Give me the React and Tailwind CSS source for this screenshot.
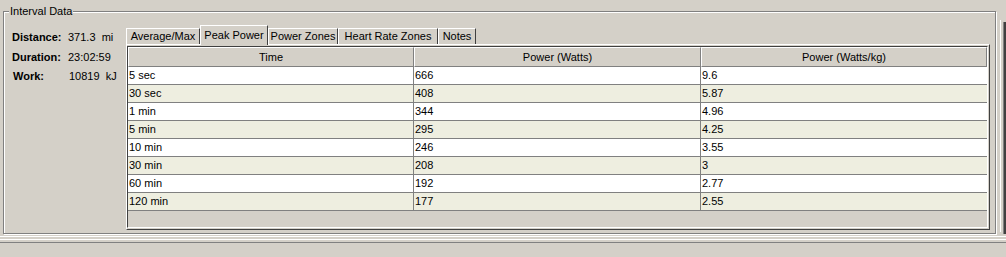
const rows = [
  ['5 sec', '666', '9.6'],
  ['30 sec', '408', '5.87'],
  ['1 min', '344', '4.96'],
  ['5 min', '295', '4.25'],
  ['10 min', '246', '3.55'],
  ['30 min', '208', '3'],
  ['60 min', '192', '2.77'],
  ['120 min', '177', '2.55'],
];

const tabs = [
  { label: 'Average/Max', w: 'w-[74px]' },
  { label: 'Peak Power', w: 'w-[68px]', active: true },
  { label: 'Power Zones', w: 'w-[70px]' },
  { label: 'Heart Rate Zones', w: 'w-[100px]' },
  { label: 'Notes', w: 'w-[38px]' },
];

function Tabs() {
  return (
    <div className="flex items-end h-[19px]">
      {tabs.map((t) =>
        t.active ? (
          <div
            key={t.label}
            className={`${t.w} h-[20px] -mb-px relative z-10 bg-[#d4d0c8] border-t border-l border-white border-r border-r-[#404040] flex items-start justify-center pt-[1px]`}
          >
            {t.label}
          </div>
        ) : (
          <div
            key={t.label}
            className={`${t.w} h-[16px] border-t border-l border-white border-r border-r-[#404040] flex items-center justify-center`}
          >
            {t.label}
          </div>
        )
      )}
    </div>
  );
}

function PeakTable() {
  return (
    <div className="h-[182px] border border-t-[#404040] border-l-[#404040] border-r-white border-b-white bg-[#d4d0c8] flex flex-col">
      <div className="flex h-[20px]">
        {['Time', 'Power (Watts)', 'Power (Watts/kg)'].map((h, i) => (
          <div
            key={h}
            className={`${i === 1 ? 'w-[287px]' : 'w-[286px]'} border-t border-l border-white border-r border-b border-r-[#808080] border-b-[#808080] flex items-center justify-center`}
          >
            {h}
          </div>
        ))}
      </div>
      {rows.map((r, i) => (
        <div
          key={r[0]}
          className={`flex h-[18px] border-b border-[#808080] ${i % 2 === 0 ? 'bg-white' : 'bg-[#eeeee0]'}`}
        >
          <div className="w-[286px] border-r border-[#808080] pl-[1px] flex items-center">{r[0]}</div>
          <div className="w-[287px] border-r border-[#808080] pl-[1px] flex items-center">{r[1]}</div>
          <div className="w-[286px] pl-[1px] flex items-center">{r[2]}</div>
        </div>
      ))}
    </div>
  );
}

export default function App() {
  return (
    <div
      className="w-[1006px] h-[257px] bg-[#d4d0c8] text-black text-[11px] overflow-hidden flex flex-col"
      style={{ fontFamily: '"Liberation Sans", Arial, sans-serif' }}
    >
      <div className="flex h-[236px]">
        <div className="ml-[3px] mt-[11px] w-[993px] h-[223px] relative border border-[#808080] shadow-[inset_1px_1px_0_#fff,1px_1px_0_#fff]">
          <span className="absolute left-[5px] -top-[8px] px-[1px] bg-[#d4d0c8] leading-[14px]">
            Interval Data
          </span>
          <div className="flex items-start pl-[8px] pt-[13px]">
            <div className="w-[114px] mt-[3px] grid grid-cols-[56px_1fr] auto-rows-[19.5px] leading-[19.5px]">
              <span className="font-bold">Distance:</span>
              <span>371.3&nbsp;&nbsp;mi</span>
              <span className="font-bold">Duration:</span>
              <span>23:02:59</span>
              <span className="font-bold pl-px">Work:</span>
              <span className="pl-px">10819&nbsp;&nbsp;kJ</span>
            </div>
            <div className="flex flex-col">
              <Tabs />
              <div className="w-[864px] h-[186px] border-t border-l border-white border-r border-b border-r-[#404040] border-b-[#404040] pt-[1px] pr-[1px] pb-[1px]">
                <PeakTable />
              </div>
            </div>
          </div>
        </div>
        <div className="ml-[4px] mt-[20px] h-[212px] border-l border-white pl-[2px]">
          <div className="h-full w-[3px] border-l border-l-[#808080] border-r-2 border-r-[#404040] mt-[2px]" />
        </div>
      </div>
      <div className="h-px bg-white" />
      <div className="h-[2px]" />
      <div className="h-px bg-white" />
      <div className="h-[2px]" />
      <div className="h-px bg-[#808080]" />
    </div>
  );
}
